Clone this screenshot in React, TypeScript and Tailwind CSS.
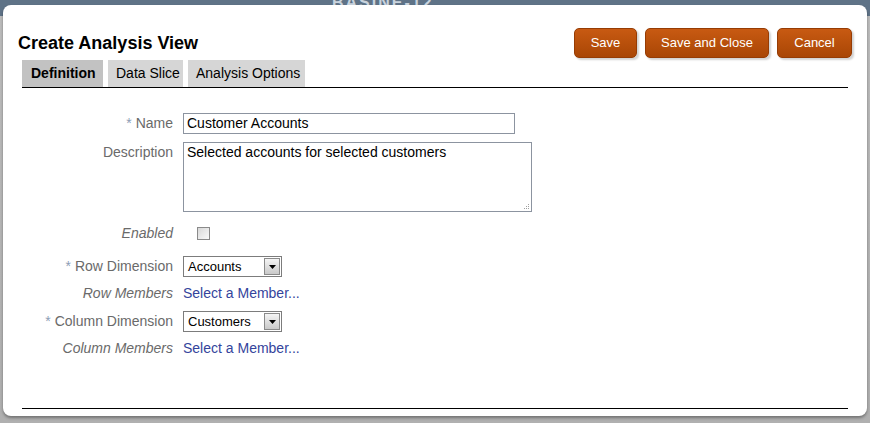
import React from 'react';

const font = { fontFamily: '"Liberation Sans", Arial, sans-serif' };

function OrangeButton({ label, width }: { label: string; width: string }) {
  return (
    <button
      type="button"
      className={`h-[30px] ${width} rounded-[5px] border border-[#963c04] bg-[linear-gradient(to_bottom,#c85a12,#a94605)] text-[13px] text-white shadow-[2px_2px_2px_rgba(0,0,0,0.18)]`}
    >
      {label}
    </button>
  );
}

function Label({ text, required, italic }: { text: string; required?: boolean; italic?: boolean }) {
  return (
    <div className={`w-[170px] text-right text-[14px] text-[#6a6a6a] ${italic ? 'italic' : ''}`}>
      {required && <span className="mr-[4px] text-[#8d9db5]">*</span>}
      {text}
    </div>
  );
}

function Select({ value }: { value: string }) {
  return (
    <div className="flex h-[21px] w-[99px] items-center border border-[#7c7c7c] bg-white">
      <span className="flex-1 pl-[4px] text-[13px] text-black">{value}</span>
      <span className="mr-[1px] flex h-[17px] w-[16px] items-center justify-center border border-[#8a8a8a] bg-[linear-gradient(to_bottom,#f4f4f4,#c9c9c9)]">
        <svg width="7" height="4" viewBox="0 0 7 4">
          <path d="M0 0h7L3.5 4z" fill="#000" />
        </svg>
      </span>
    </div>
  );
}

export default function App() {
  return (
    <div
      className="relative h-[423px] w-[870px] overflow-hidden bg-[linear-gradient(to_bottom,#5f7387_0px,#5f7387_16px,#bdbdbd_16px,#b0b0b0_100%)] pt-[5px] pl-[3px]"
      style={font}
    >
      <div className="absolute left-[332px] top-[-9px] text-[16px] font-bold tracking-[2px] text-[#c9d3dd]">BASINE-12</div>
      <div className="relative h-[411px] w-[864px] rounded-[8px] bg-white shadow-[0_2px_3px_rgba(0,0,0,0.35)]">
        <div className="flex items-center justify-between pt-[23px] pl-[15px] pr-[15px]">
          <h1 className="text-[18px] font-bold text-black">Create Analysis View</h1>
          <div className="flex gap-[8px]">
            <OrangeButton label="Save" width="w-[63px]" />
            <OrangeButton label="Save and Close" width="w-[124px]" />
            <OrangeButton label="Cancel" width="w-[75px]" />
          </div>
        </div>

        <div className="mx-[19px] mt-[2px] flex gap-[5px] border-b border-black">
          <div className="flex h-[27px] w-[81px] items-center bg-[#c2c2c2] pl-[9px] text-[14px] font-bold text-black">Definition</div>
          <div className="flex h-[27px] w-[75px] items-center bg-[#d6d6d6] pl-[8px] text-[14px] text-black">Data Slice</div>
          <div className="flex h-[27px] w-[117px] items-center bg-[#d6d6d6] pl-[8px] text-[14px] text-black">Analysis Options</div>
        </div>

        <div className="mt-[25px] flex flex-col">
          <div className="flex h-[21px] items-center gap-[10px]">
            <Label text="Name" required />
            <div className="flex h-[21px] w-[332px] items-center border border-[#8c94a0] pl-[3px] text-[14px] text-black">
              Customer Accounts
            </div>
          </div>

          <div className="mt-[8px] flex items-start gap-[10px]">
            <Label text="Description" />
            <div className="relative">
              <textarea
                readOnly
                defaultValue="Selected accounts for selected customers"
                className="block h-[70px] w-[349px] resize-none border border-[#8c94a0] px-[3px] py-0 text-[14px] leading-[18px] text-black outline-none"
                style={font}
              />
              <svg className="absolute right-[2px] bottom-[2px]" width="7" height="7" viewBox="0 0 7 7">
                <rect x="5" y="1" width="1" height="1" fill="#a0a0a0" />
                <rect x="3" y="3" width="1" height="1" fill="#a0a0a0" />
                <rect x="5" y="3" width="1" height="1" fill="#a0a0a0" />
                <rect x="1" y="5" width="1" height="1" fill="#a0a0a0" />
                <rect x="3" y="5" width="1" height="1" fill="#a0a0a0" />
                <rect x="5" y="5" width="1" height="1" fill="#a0a0a0" />
              </svg>
            </div>
          </div>

          <div className="mt-[11px] flex h-[20px] items-center gap-[10px]">
            <Label text="Enabled" italic />
            <span className="ml-[14px] h-[13px] w-[13px] border border-[#8a8a8a] bg-[linear-gradient(135deg,#d8d8d8,#fafafa)]" />
          </div>

          <div className="mt-[13px] flex h-[21px] items-center gap-[10px]">
            <Label text="Row Dimension" required />
            <Select value="Accounts" />
          </div>

          <div className="mt-[6px] flex h-[20px] items-center gap-[10px]">
            <Label text="Row Members" italic />
            <span className="text-[14px] text-[#34449c]">Select a Member...</span>
          </div>

          <div className="mt-[8px] flex h-[21px] items-center gap-[10px]">
            <Label text="Column Dimension" required />
            <Select value="Customers" />
          </div>

          <div className="mt-[6px] flex h-[20px] items-center gap-[10px]">
            <Label text="Column Members" italic />
            <span className="text-[14px] text-[#34449c]">Select a Member...</span>
          </div>
        </div>

        <div className="mx-[19px] mt-[50px] border-t border-black" />
      </div>
    </div>
  );
}
